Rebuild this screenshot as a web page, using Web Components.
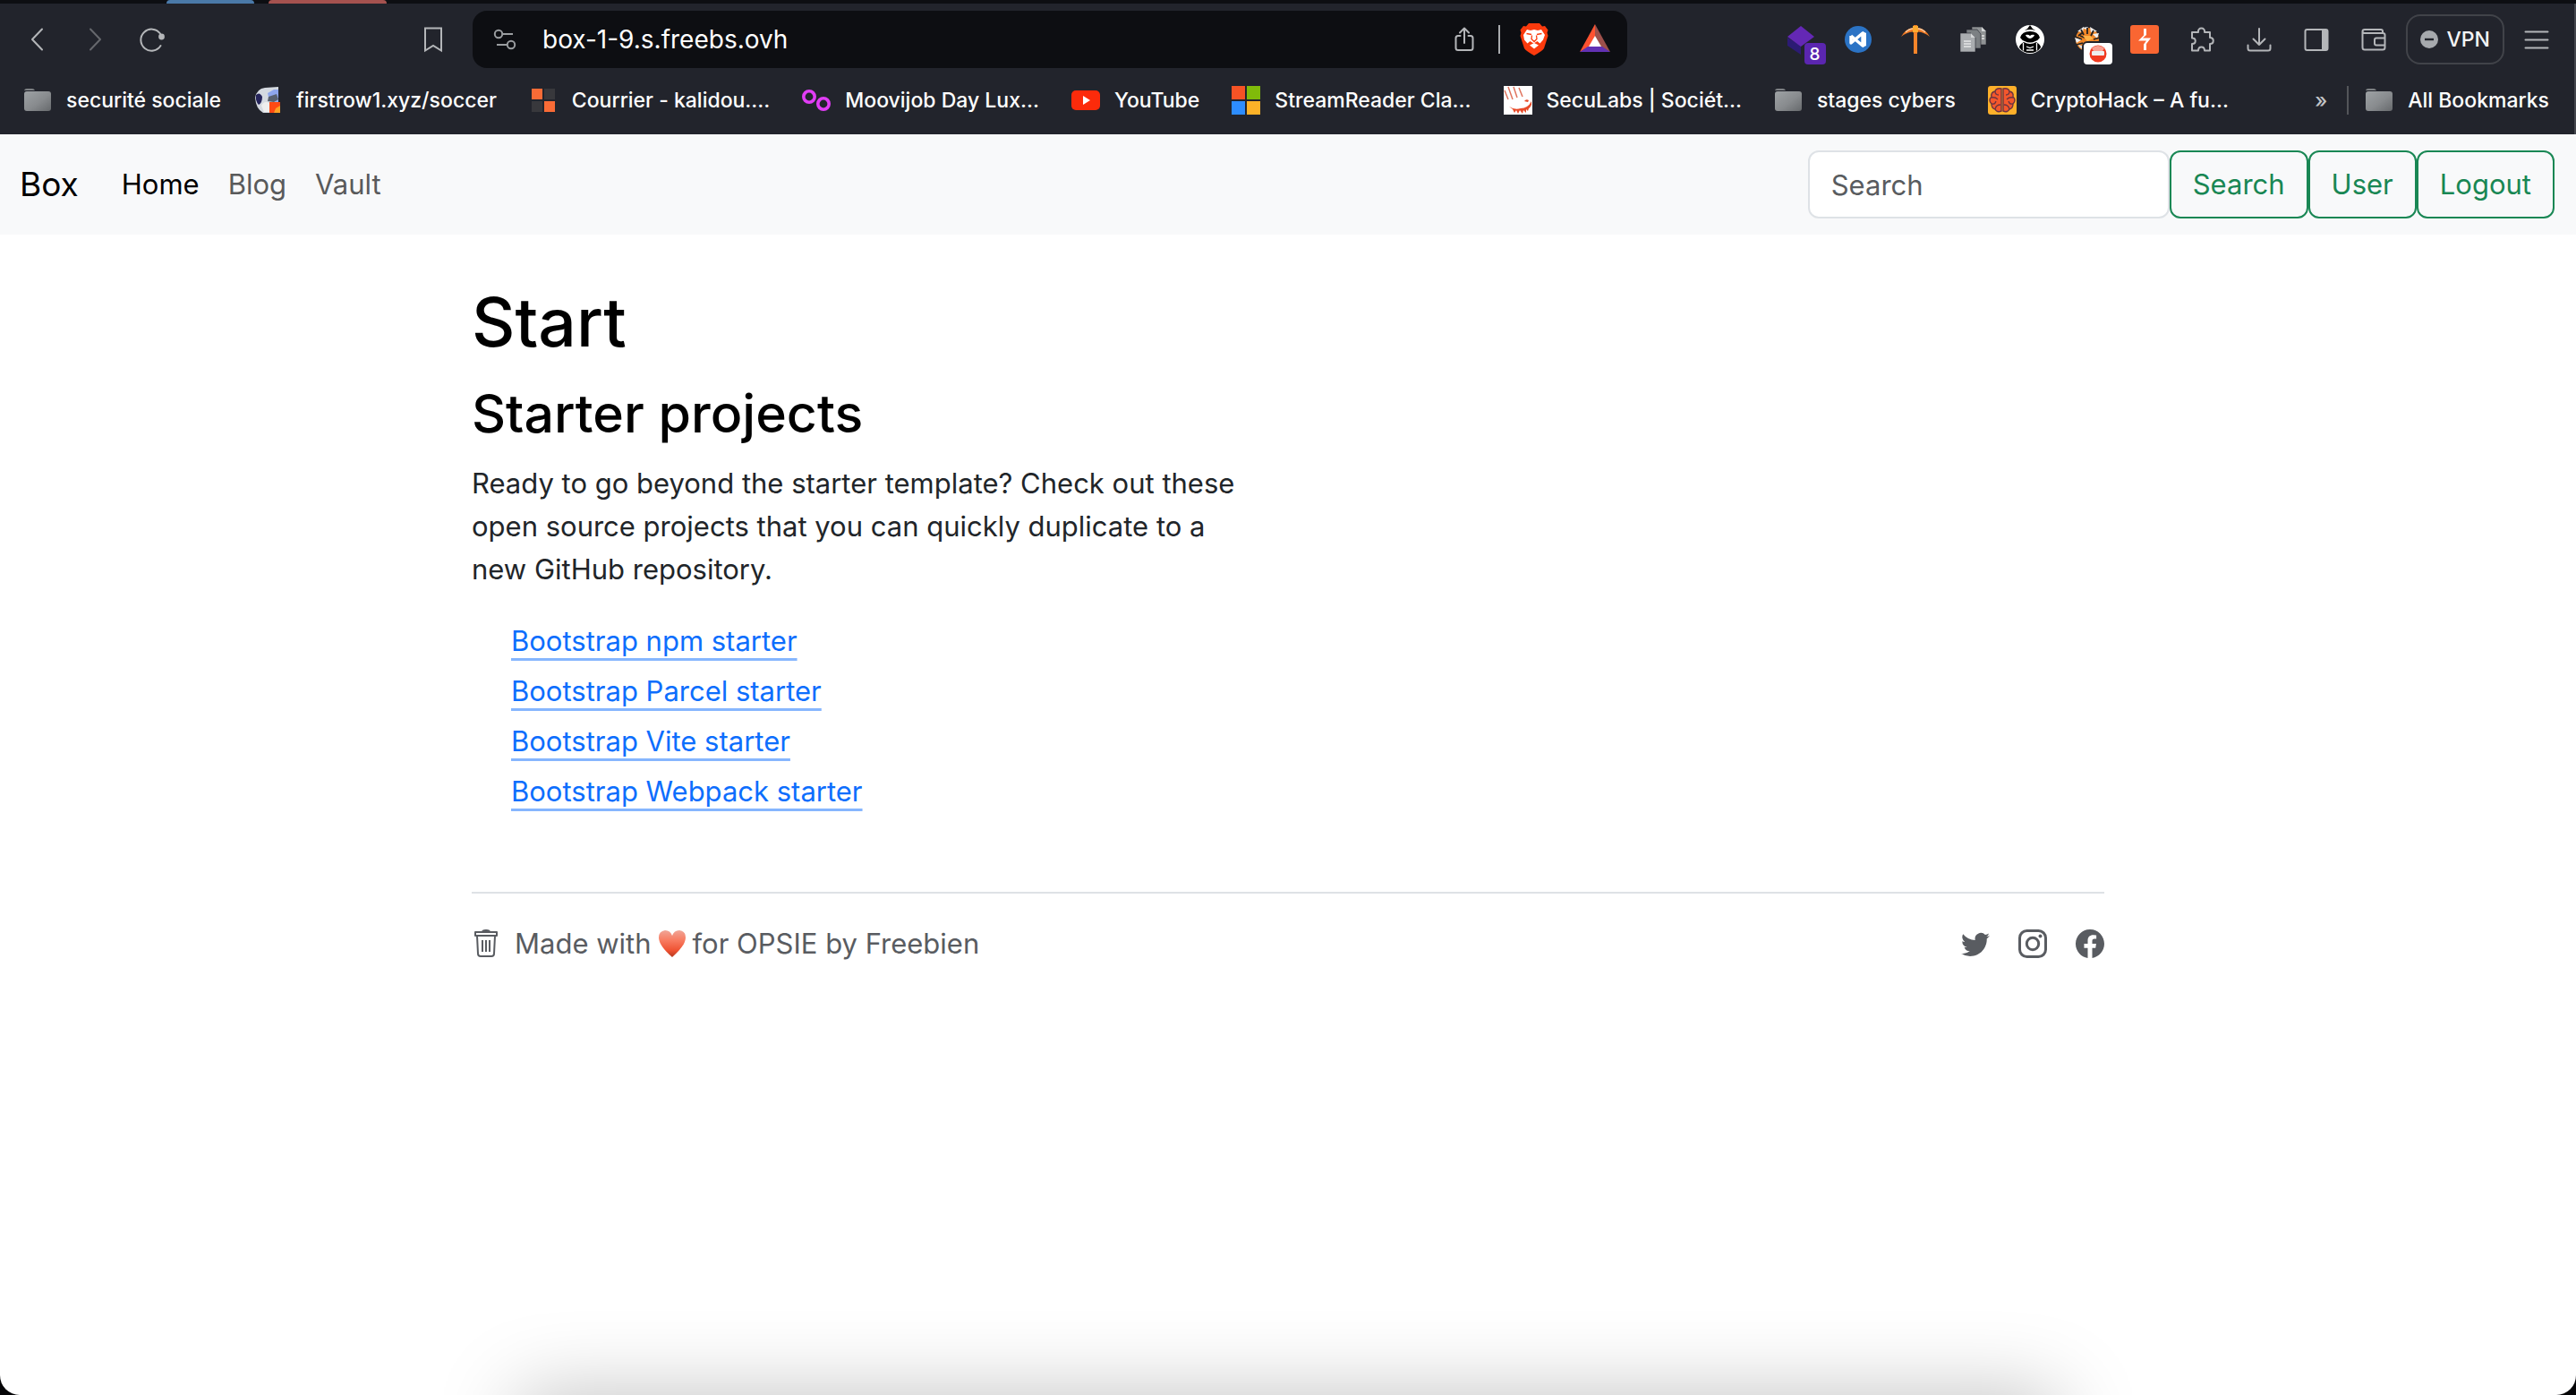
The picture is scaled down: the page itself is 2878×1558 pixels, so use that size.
<!DOCTYPE html>
<html lang="en">
<head>
<meta charset="utf-8">
<title>Box</title>
<style>
  html, body { margin: 0; height: 100%; }
  body { background: #050507; font-family: Inter, "Liberation Sans", sans-serif; font-size: 31px; line-height: 48px; color: #212529; }
</style>
</head>
<body>
<browser-window>
  <tab-strip slot="chrome"></tab-strip>
  <browser-toolbar slot="chrome"></browser-toolbar>
  <bookmarks-bar slot="chrome">
    <bookmark-link icon="folder">securité sociale</bookmark-link>
    <bookmark-link icon="soccer">firstrow1.xyz/soccer</bookmark-link>
    <bookmark-link icon="courrier">Courrier - kalidou....</bookmark-link>
    <bookmark-link icon="moovijob">Moovijob Day Lux...</bookmark-link>
    <bookmark-link icon="youtube">YouTube</bookmark-link>
    <bookmark-link icon="windows">StreamReader Cla...</bookmark-link>
    <bookmark-link icon="seculabs">SecuLabs | Sociét...</bookmark-link>
    <bookmark-link icon="folder">stages cybers</bookmark-link>
    <bookmark-link icon="brain">CryptoHack – A fu...</bookmark-link>
    <bookmark-link slot="all" icon="folder">All Bookmarks</bookmark-link>
  </bookmarks-bar>
  <site-navbar>
    <span slot="brand">Box</span>
    <nav-link current>Home</nav-link>
    <nav-link>Blog</nav-link>
    <nav-link>Vault</nav-link>
    <outline-button slot="actions">Search</outline-button>
    <outline-button slot="actions">User</outline-button>
    <outline-button slot="actions">Logout</outline-button>
  </site-navbar>
  <starter-page>
    <span slot="title">Start</span>
    <span slot="subtitle">Starter projects</span>
    <span slot="lead">Ready to go beyond the starter template? Check out these open source projects that you can quickly duplicate to a new GitHub repository.</span>
    <starter-link>Bootstrap npm starter</starter-link>
    <starter-link>Bootstrap Parcel starter</starter-link>
    <starter-link>Bootstrap Vite starter</starter-link>
    <starter-link>Bootstrap Webpack starter</starter-link>
    <site-footer slot="footer"></site-footer>
  </starter-page>
</browser-window>

<script>
const FOLDER = `<defs><linearGradient id="g" x1="0" y1="0" x2="1" y2="1"><stop offset="0" stop-color="#9ea2a5"/><stop offset=".55" stop-color="#888b8e"/><stop offset="1" stop-color="#66696c"/></linearGradient></defs><path d="M1 6q0-3 3-3h6q2 0 3 2h-12z" fill="#7e8184"/><rect x="1" y="6" width="30" height="22" rx="3" fill="url(#g)"/>`;
const LINE = 'fill="none" stroke="#b4b6b9" stroke-width="2" stroke-linecap="round" stroke-linejoin="round"';
const ICONS = {
  folder: FOLDER,
  back: `<path d="M21 4.500L10 16l11 11.500" ${LINE}/>`,
  forward: `<path d="M11 4.500L22 16 11 27.500" ${LINE} style="stroke:#66686d"/>`,
  reload: `<path d="M25 9.500A12 12 0 1 0 25.500 23" ${LINE}/><circle cx="26.500" cy="13" r="3.400" fill="#b4b6b9"/>`,
  bookmark: `<path d="M7 3.500h18v25l-9-5.500-9 5.500z" ${LINE} style="stroke-linejoin:miter"/>`,
  tune: `<g fill="none" stroke="#9a9da0" stroke-width="2"><circle cx="9" cy="10" r="4.200"/><path d="M13.500 10H25M7 22h12"/><circle cx="23" cy="22" r="4.200"/></g>`,
  share: `<path d="M11.500 12H9q-2.500 0-2.500 2.500v11Q6.500 28 9 28h14q2.500 0 2.500-2.500v-11Q25.500 12 23 12h-2.500M16 20V3.500M11 8.500l5-5 5 5" ${LINE}/>`,
  brave: `<g transform="translate(0 -2)"><path d="M10 0h12l3 3.500 3-.5 3.500 4.500-1 3 1 3.500-4.500 14Q25 31 16 36 7 31 5 28L.5 14l1-3.500-1-3L4 3l3 .5z" fill="#fb3a0d"/><path d="M8 7l4 1 4-1 4 1 4-1 4 6-2 5.500-3.500 4-3-2.500-4 2.500-4-2.500-3 2.500-3.500-4L4 13z" fill="#fff"/><path d="M16 22l5 2.500-5 4-5-4z" fill="#fff"/><path d="M7.500 11.500l5.500 1M24.500 11.500l-5.500 1M13.500 13.500l-.5 4 3 3 3-3-.5-4" fill="none" stroke="#fb3a0d" stroke-width="1.300"/></g>`,
  bat: `<g transform="translate(0 -1)"><path d="M16 0L-1 31l11-6 6-11z" fill="#ff5230"/><path d="M16 0l17 31-11-6-6-11z" fill="#9d504b"/><path d="M-1 31l9-6h16l9 6z" fill="#6231b4"/><path d="M16 13l7 12H9z" fill="#fff"/></g>`,
  layers: `<path d="M1 14l15 9v10L1 23z" fill="#2c1b74"/><path d="M16 1l15 12-15 11L1 13z" fill="#6428b5"/>`,
  vs: `<circle cx="16" cy="16" r="15" fill="#2b73c5"/><path d="M8 12v8l13-11v14L8 12" fill="none" stroke="#fff" stroke-width="3.400" stroke-linejoin="round"/><path d="M21 7l4 2v14l-4 2z" fill="#fff"/>`,
  pick: `<path d="M14 8h4v24h-4z" fill="#f7852a"/><path d="M0 13Q5 4 13 3l1-3h4l1 3q8 1 13 10-6-5-13-5.500l-1 1.500h-4l-1-1.500Q6 8 0 13z" fill="#f07a24"/><path d="M5 8Q9 4 14 4M27 8Q23 4 18 4" stroke="#f9c9a0" stroke-width="1.600" fill="none"/><path d="M13 1h6v7h-6z" fill="#ffab30"/>`,
  docs: `<g stroke="#22242c" stroke-width=".6"><path d="M15 2h11l5 5v15H15z" fill="#909395"/><path d="M9 5h12l4 5v16H9z" fill="#7c8083"/><path d="M2 9h12l5 5v16H2z" fill="#aaadb0"/></g><path d="M14 9v5h5M26 2v5h5" fill="#d4d6d7"/><path d="M6 18h8M6 21h8M6 24h8M26 12h3M26 15h3" stroke="#e6e7e8" stroke-width="1.400"/>`,
  ninja: `<circle cx="16" cy="16" r="16" fill="#fff"/><path d="M10 6Q14 4 16 0q2 4 6 6-6-2-12 0z" fill="#000"/><path d="M5 14Q7 7 16 7t11 7q-2 3-5 4-6 3-12 0-3-1-5-4z" fill="#000"/><path d="M11 11q3-1 5 1 2-2 5-1-1 3-5 4-4-1-5-4z" fill="#fff"/><path d="M9 19q7 4 14 0 5 3 5 6-4 6-12 6T4 25q0-3 5-6z" fill="#000"/><path d="M8.500 20v8.500M23.500 20v8.500M12 24l4 1.500 4-1.500M12 28h8" fill="none" stroke="#fff" stroke-width="1.300"/>`,
  tiger: `<circle cx="16" cy="16" r="13" fill="#ef8526"/><path d="M5 7l7-5-1 6zM19 2l8 5-7 1zM2 14l8 2-6 4zM22 10l7-1-2 6zM10 3l7-1-2 3z" fill="#eee"/><path d="M9 5l3 6M16 3v7M23 6l-3 6M0 12l10 4M30 14l-7 2M4 22l7-2M13 14l-5-2M6 12l4-3" stroke="#242222" stroke-width="1.800" fill="none"/><path d="M11 12h8l4 3-7 3z" fill="#ffb347"/><path d="M6 22q2 5 8 6v-4z" fill="#ddd"/>`,
  burp: `<rect width="32" height="32" rx="3" fill="#f96632"/><path d="M15 4h3v7l-4 3.500h9L18 21v7h-3v-6.500l3-4H9l6-6z" fill="#fff"/>`,
  puzzle: `<path d="M5 8h7c-1-6 8-6 7 0h6v6c5 0 5 7 0 7v7.500h-6c0-5.500-7-5.500-7 0H5v-7.500c5 0 5-6.500 0-6.500z" ${LINE}/>`,
  download: `<path d="M16 4v18M9.500 15.500L16 22l6.500-6.500M3.500 22.500V26q0 2.500 2.500 2.500h20q2.500 0 2.500-2.500v-3.500" ${LINE}/>`,
  panel: `<rect x="3.500" y="5" width="25" height="23" rx="2" ${LINE}/><path d="M22 5h6v23h-6z" fill="#b4b6b9"/>`,
  wallet: `<path d="M26 9V7q0-2-2-2H6Q3.500 5 3.500 7v18q0 2.500 2.500 2.500h20q2.500 0 2.500-2.500V11q0-2-2.500-2H6Q3.500 9 3.500 7M28 14.500h-9q-2 0-2 2v4q0 2 2 2h9" ${LINE}/>`,
  vpn: `<circle cx="16" cy="16" r="10" fill="#a6a9ad"/><path d="M11 16h10" stroke="#22242c" stroke-width="2.400"/>`,
  menu: `<path d="M3.500 7.500h25M3.500 16.500h25M3.500 25.500h25" ${LINE}/>`,
  soccer: `<path d="M2 13Q4 3 13 2l15-1v18l-6 11H11Q3 26 2 13z" fill="#d5dae1"/><path d="M3 10Q7 6 10 12q0 7-4 9-4-4-3-11z" fill="#25245a"/><path d="M16 8l7-4h5v14l-10-1z" fill="#8ea6ec"/><path d="M17 12l9-3 2 6-5 3-7-1z" fill="#59616f"/><path d="M9 22q3-6 9-3v10h-6z" fill="#eee"/><path d="M18 18h12v12H18z" fill="#ff4a13"/><path d="M25 25l5-3v8h-7z" fill="#ffa022"/>`,
  courrier: `<path d="M3 3h12v12H3zM17 17h12v12H17z" fill="#f96b36"/><path d="M17 3h12v12H17zM3 17h12v12H3z" fill="#38383c"/>`,
  moovijob: `<g fill="none" stroke="#e13df5" stroke-width="3.600"><circle cx="8" cy="12" r="6.200"/><circle cx="24" cy="20" r="6.200"/></g>`,
  youtube: `<rect y="5" width="32" height="22" rx="5" fill="#fc2b0b"/><path d="M13 11l8 5-8 5z" fill="#fff"/>`,
  windows: `<path d="M0 0h15v15H0z" fill="#f65325"/><path d="M17 0h15v15H17z" fill="#80bb0a"/><path d="M0 17h15v15H0z" fill="#2d8dff"/><path d="M17 17h15v15H17z" fill="#fdb228"/>`,
  seculabs: `<path d="M0 0h32v32H0z" fill="#fff"/><path d="M1 5l4 10M5 1l5 14M11 1l4 12M17 2l4 10" fill="none" stroke="#e0745e" stroke-width="1.500"/><path d="M23 17q2-3 5-1l-1 2zM6 23q6 4 13 2 8 0 12-8v4q-2 4-3 4l-1 3-2-2v4l-3-3-1 4-3-4-2 4-2-4-2 3-2-4z" fill="#e84a28"/>`,
  brain: `<rect width="32" height="32" rx="3" fill="#fdb02a"/><path d="M15 3Q9 2 8 6 3 7 4 12q-4 4 0 8 0 5 4 6 2 4 7 2zM17 3q6-1 7 3 5 1 4 6 4 4 0 8 0 5-4 6-2 4-7 2z" fill="#f4572c" stroke="#6d3440" stroke-width="1.400"/><path d="M8 6q0 4 4 4M4 13q4-1 7 2M4 20q4 1 5-3M8 26q1-5 6-5M24 6q0 4-4 4M28 13q-4-1-7 2M28 20q-4 1-5-3M24 26q-1-5-6-5" fill="none" stroke="#6d3440" stroke-width="1.300"/>`
};
const svg = (name, size = 32) => `<svg width="${size}" height="${size}" viewBox="0 0 32 32" overflow="visible" aria-hidden="true">${ICONS[name]}</svg>`;

const define = (tag, render) => customElements.define(tag, class extends HTMLElement {
  constructor() { super(); this.attachShadow({ mode: 'open' }); }
  connectedCallback() {
    const template = document.createElement('template');
    template.innerHTML = '<style>:host,*{box-sizing:border-box}svg{display:block;flex:none}button,input{font:inherit;margin:0}</style>' + render(this);
    this.shadowRoot.replaceChildren(template.content.cloneNode(true));
  }
});

define('browser-window', () => `
  <style>
    :host { display: flex; flex-direction: column; position: relative; min-height: 100%; background: #fff; border-radius: 0 0 22px 22px; overflow: hidden; }
    .dock { position: absolute; top: 100%; left: 580px; right: 580px; height: 90px; box-shadow: 0 0 90px rgba(0,0,0,.25); }
  </style>
  <slot name="chrome"></slot><slot></slot><div class="dock"></div>`);

define('tab-strip', () => `
  <style>
    :host { display: flex; gap: 16px; height: 4px; padding-left: 186px; background: #0d0e12; }
    i { width: 98px; background: #4a79a8; border-radius: 4px 4px 0 0; }
    i + i { width: 132px; background: #a5524f; }
  </style><i></i><i></i>`);

define('tool-button', el => `
  <style>
    :host { display: block; position: relative; }
    button { display: block; width: 32px; height: 32px; padding: 0; border: 0; background: none; }
    ::slotted(*) { position: absolute; right: -12px; top: 20px; }
  </style>
  <button type="button" aria-label="${el.getAttribute('icon')}">${svg(el.getAttribute('icon'))}</button><slot></slot>`);

define('count-badge', () => `
  <style>:host { display: block; width: 24px; height: 24px; border-radius: 4px; background: #5b26b0; color: #fff; font-size: 19px; line-height: 25px; font-weight: 500; text-align: center; }</style><slot></slot>`);
define('block-badge', () => `
  <style>:host { display: grid; place-items: center; width: 32px; height: 24px; border-radius: 4px; background: #fff; box-shadow: 0 0 0 2px #22242c; }</style>
  <svg width="20" height="20" viewBox="0 0 20 20"><circle cx="10" cy="10" r="9.500" fill="#f13a20"/><path d="M3 4q7-6 14 0l-2 3H5z" fill="#f9a193"/><rect x="3" y="7" width="14" height="5" rx="1" fill="#eee"/></svg>`);

define('browser-toolbar', () => `
  <style>
    :host { display: flex; align-items: center; height: 80px; padding: 0 26px; background: #22242c; border-right: 2px solid #44464d; }
    .nav, .tools { display: flex; gap: 32px; }
    .nav { margin-right: 282px; }
    .url { flex: 1; display: flex; align-items: center; height: 64px; margin: 0 178px 0 28px; padding: 0 20px; border-radius: 16px; background: #0d0e12; }
    input { flex: 1; min-width: 0; margin: 0 26px; padding: 0; border: 0; outline: 0; background: none; color: #fff; font-size: 28px; }
    .sep { width: 2px; height: 32px; margin: 0 22px; background: #a9abae; }
    .rewards { margin-left: 36px; }
    .vpn { display: flex; align-items: center; gap: 4px; height: 56px; margin: 0 20px; padding: 0 14px 0 8px; border: 2px solid #414349; border-radius: 16px; background: none; color: #f4f4f5; font-size: 23px; font-weight: 500; }
  </style>
  <div class="nav"><tool-button icon="back"></tool-button><tool-button icon="forward"></tool-button><tool-button icon="reload"></tool-button></div>
  <tool-button icon="bookmark"></tool-button>
  <div class="url">
    <tool-button icon="tune"></tool-button>
    <input type="text" aria-label="Address" value="box-1-9.s.freebs.ovh">
    <tool-button icon="share"></tool-button><div class="sep"></div>
    <tool-button icon="brave"></tool-button><tool-button class="rewards" icon="bat"></tool-button>
  </div>
  <div class="tools">
    <tool-button icon="layers"><count-badge>8</count-badge></tool-button>
    <tool-button icon="vs"></tool-button><tool-button icon="pick"></tool-button>
    <tool-button icon="docs"></tool-button><tool-button icon="ninja"></tool-button>
    <tool-button icon="tiger"><block-badge></block-badge></tool-button>
    <tool-button icon="burp"></tool-button><tool-button icon="puzzle"></tool-button>
    <tool-button icon="download"></tool-button><tool-button icon="panel"></tool-button>
    <tool-button icon="wallet"></tool-button>
  </div>
  <button class="vpn" type="button">${svg('vpn')}VPN</button>
  <tool-button icon="menu"></tool-button>`);

define('bookmarks-bar', () => `
  <style>
    :host { display: flex; align-items: center; height: 66px; padding: 0 28px 10px 26px; background: #22242c; border-right: 2px solid #44464d; color: #fff; font-size: 23px; line-height: 32px; font-weight: 500; }
    .list { flex: 1; display: flex; gap: 36px; }
    button { padding: 0; border: 0; background: none; color: #c2c4c7; }
    .sep { width: 2px; height: 32px; margin: 0 18px 0 22px; background: #53555a; }
  </style>
  <div class="list"><slot></slot></div>
  <button type="button" aria-label="More bookmarks">»</button><div class="sep"></div><slot name="all"></slot>`);

define('bookmark-link', el => `
  <style>
    :host { display: block; }
    a { display: flex; align-items: center; gap: 16px; color: inherit; text-decoration: none; white-space: nowrap; }
  </style><a href="#">${svg(el.getAttribute('icon'))}<span><slot></slot></span></a>`);

define('site-navbar', () => `
  <style>
    :host { display: flex; align-items: center; height: 112px; padding: 0 24px 0 22px; background: #f8f9fa; }
    .brand { margin-right: 32px; color: #000; font-size: 37px; text-decoration: none; }
    nav { flex: 1; display: flex; }
    form { display: flex; }
    input { width: 404px; height: 76px; padding: 0 24px; border: 2px solid #dee2e6; border-radius: 12px; background: #fff; color: #212529; outline: 0; }
    input::placeholder { color: #595c5f; opacity: 1; }
  </style>
  <a class="brand" href="#"><slot name="brand"></slot></a>
  <nav><slot></slot></nav>
  <form><input type="search" placeholder="Search" aria-label="Search"><slot name="actions"></slot></form>`);

define('nav-link', el => `
  <style>
    :host { display: block; padding: 0 16px; }
    a { color: ${el.hasAttribute('current') ? '#000' : '#595a5b'}; text-decoration: none; }
  </style><a href="#"><slot></slot></a>`);

define('outline-button', () => `
  <style>
    :host { display: block; }
    button { height: 76px; padding: 0 24px; border: 2px solid #198754; border-radius: 12px; background: none; color: #198754; }
  </style><button type="button"><slot></slot></button>`);

define('starter-page', () => `
  <style>
    :host { display: block; width: 100%; max-width: 1920px; margin: 0 auto; padding: 48px; }
    h1, h2 { margin: 0 0 16px; font-weight: 500; color: #000; }
    h1 { font-size: 75px; line-height: 96px; margin-top: 2px; }
    h2 { font-size: 59px; line-height: 76px; }
    p { max-width: 880px; margin: 0 0 32px; }
    ul { display: flex; flex-direction: column; gap: 8px; margin: 0; padding: 0 0 88px 44px; list-style: none; }
  </style>
  <main>
    <h1><slot name="title"></slot></h1>
    <h2><slot name="subtitle"></slot></h2>
    <p><slot name="lead"></slot></p>
    <ul><slot></slot></ul>
  </main>
  <slot name="footer"></slot>`);

define('starter-link', () => `
  <style>
    :host { display: list-item; list-style: none; height: 48px; }
    a { color: #0d6efd; text-decoration: underline rgba(13,110,253,.5) 3px; text-underline-offset: 8px; text-decoration-skip-ink: none; }
  </style><a href="#"><slot></slot></a>`);

define('site-footer', () => `
  <style>
    :host { display: flex; align-items: center; justify-content: space-between; padding-top: 32px; border-top: 2px solid #dee2e6; color: #595c61; }
    div, .text { display: flex; align-items: center; }
    .made { gap: 16px; }
    .text { gap: 7px; }
    .social { gap: 32px; }
    a { color: inherit; }
  </style>
  <div class="made">
    <a href="#" aria-label="Trash"><svg width="32" height="32" viewBox="0 0 32 32" fill="none" stroke="currentColor" stroke-width="2"><path d="M4 3h24v4H4zM6 7l1 20q0 3 3 3h12q3 0 3-3l1-20M12 12v13M16 12v13M20 12v13M12 3q0-2 4-2t4 2" stroke-linejoin="round"/></svg></a>
    <span class="text"><span>Made with</span><svg width="32" height="32" viewBox="0 0 32 32" aria-hidden="true"><defs><linearGradient id="h" x1="0" y1="0" x2="0" y2="1"><stop offset="0" stop-color="#f0a597"/><stop offset=".35" stop-color="#f87e64"/><stop offset=".75" stop-color="#ef5232"/><stop offset="1" stop-color="#b43a20"/></linearGradient></defs><path d="M16 31Q1 18 1 9q0-7 7-8 6 0 8 6 2-6 8-6 7 1 7 8 0 9-15 22z" fill="url(#h)"/></svg><span>for OPSIE by Freebien</span></span>
  </div>
  <div class="social">
    <a href="#" aria-label="Twitter"><svg width="32" height="32" viewBox="0 0 16 16" fill="currentColor"><path d="M5.026 15c6.038 0 9.341-5.003 9.341-9.334q.002-.211-.006-.422A6.700 6.700 0 0 0 16 3.542a6.700 6.700 0 0 1-1.889.518 3.300 3.300 0 0 0 1.447-1.817 6.500 6.500 0 0 1-2.087.793A3.286 3.286 0 0 0 7.875 6.030a9.320 9.320 0 0 1-6.767-3.429 3.290 3.290 0 0 0 1.018 4.382A3.300 3.300 0 0 1 .64 6.575v.045a3.290 3.290 0 0 0 2.632 3.218 3.200 3.200 0 0 1-.865.115 3 3 0 0 1-.614-.057 3.280 3.280 0 0 0 3.067 2.277A6.600 6.600 0 0 1 .78 13.580a6 6 0 0 1-.78-.045A9.340 9.340 0 0 0 5.026 15"/></svg></a>
    <a href="#" aria-label="Instagram"><svg width="32" height="32" viewBox="0 0 32 32"><g fill="none" stroke="currentColor" stroke-width="3"><rect x="1.500" y="1.500" width="29" height="29" rx="8"/><circle cx="16" cy="16" r="6.700"/></g><circle cx="24.500" cy="7.500" r="2" fill="currentColor"/></svg></a>
    <a href="#" aria-label="Facebook"><svg width="32" height="32" viewBox="0 0 16 16" fill="currentColor"><path d="M16 8.049c0-4.446-3.582-8.050-8-8.050C3.580 0-.002 3.603-.002 8.050c0 4.017 2.926 7.347 6.750 7.951v-5.625h-2.030V8.050H6.750V6.275c0-2.017 1.195-3.131 3.022-3.131.876 0 1.791.157 1.791.157v1.980h-1.009c-.993 0-1.303.621-1.303 1.258v1.510h2.218l-.354 2.326H9.250V16c3.824-.604 6.750-3.934 6.750-7.951"/></svg></a>
  </div>`);
</script>
</body>
</html>
